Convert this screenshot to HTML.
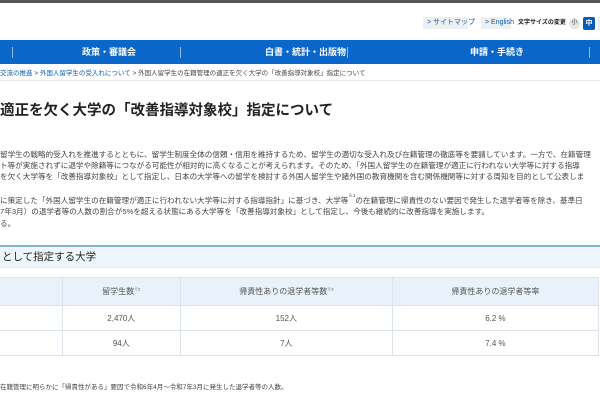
<!DOCTYPE html>
<html><head><meta charset="utf-8"><style>
*{margin:0;padding:0;box-sizing:border-box}
body{width:600px;height:400px;overflow:hidden;background:#fff;font-family:"Liberation Sans","Noto Sans CJK JP",sans-serif;color:#333;position:relative}
.a{position:absolute;white-space:nowrap}
.topbar{left:0;top:0;width:600px;height:3px;background:#555}
.btn{top:17px;height:12px;background:#eef0f2;font-size:7px;line-height:12px;color:#0a5bb5;padding-left:4px}
.nav{left:0;top:40px;width:600px;height:24px;background:#0a66c8}
.nav span{position:absolute;top:0;line-height:24px;color:#fff;font-size:9px;font-weight:bold}
.sep{position:absolute;top:7px;width:1px;height:11px;background:#8fb8e8}
.p{font-size:7.6px;color:#444;line-height:10px}
.p sup{font-size:4.5px;line-height:0;vertical-align:top}
table{position:absolute;left:-1px;top:277px;border-collapse:collapse;font-size:8px;color:#555}
td{border:1px solid #dde3ea;text-align:center}
td sup{font-size:4px;line-height:0}
tr.h td{background:#e9f2fb;height:28px}
tr.r td{height:25px}
</style></head><body>
<div class="a topbar"></div>
<div class="a btn" style="left:423px;width:45px">&gt; サイトマップ</div>
<div class="a btn" style="left:481px;width:30px">&gt; English</div>
<div class="a" style="left:518px;top:18px;font-size:6px;font-weight:bold;color:#222;line-height:10px">文字サイズの変更</div>
<div class="a" style="left:569px;top:18px;width:11px;height:11px;border-radius:50%;background:#e6e6e6;font-size:6px;text-align:center;line-height:11px">小</div>
<div class="a" style="left:583px;top:17px;width:12px;height:13px;border-radius:2px;background:#0a5bb5;color:#fff;font-size:7px;font-weight:bold;text-align:center;line-height:13px">中</div>
<div class="a" style="left:598px;top:17px;width:4px;height:13px;background:#e6eef8"></div>
<div class="a nav">
<div class="sep" style="left:12px"></div>
<span style="left:82px">政策・審議会</span>
<div class="sep" style="left:180px"></div>
<span style="left:265px">白書・統計・出版物</span>
<div class="sep" style="left:347px"></div>
<span style="left:470px">申請・手続き</span>
<div class="sep" style="left:589px"></div>
</div>
<div class="a" style="left:0;top:69px;font-size:6.5px;line-height:10px;color:#444"><span style="color:#0a5bb5">交流の推進</span> &gt; <span style="color:#0a5bb5">外国人留学生の受入れについて</span> &gt; 外国人留学生の在籍管理の適正を欠く大学の「改善指導対象校」指定について</div>
<div class="a" style="left:0;top:80px;width:600px;height:1px;background:#e8e8e8"></div>
<div class="a" style="left:0;top:102px;font-size:14.5px;font-weight:bold;color:#222;line-height:18px">適正を欠く大学の「改善指導対象校」指定について</div>
<div class="a p" style="left:0;top:150px">留学生の戦略的受入れを推進するとともに、留学生制度全体の信頼・信用を維持するため、留学生の適切な受入れ及び在籍管理の徹底等を要請しています。一方で、在籍管理</div>
<div class="a p" style="left:0;top:161px">ト等が実施されずに退学や除籍等につながる可能性が相対的に高くなることが考えられます。そのため、「外国人留学生の在籍管理が適正に行われない大学等に対する指導</div>
<div class="a p" style="left:0;top:172px">を欠く大学等を「改善指導対象校」として指定し、日本の大学等への留学を検討する外国人留学生や諸外国の教育機関を含む関係機関等に対する周知を目的として公表しま</div>
<div class="a p" style="left:0;top:196px">に策定した「外国人留学生の在籍管理が適正に行われない大学等に対する指導指針」に基づき、大学等<sup>※1</sup>の在籍管理に帰責性のない要因で発生した退学者等を除き、基準日</div>
<div class="a p" style="left:0;top:207px">7年3月）の退学者等の人数の割合が5%を超える状態にある大学等を「改善指導対象校」として指定し、今後も継続的に改善指導を実施します。</div>
<div class="a p" style="left:0;top:219px">る。</div>
<div class="a" style="left:0;top:245px;width:600px;height:23px;background:#eef6fb;border-top:2px solid #7fb7cf;border-bottom:1px solid #e3edf3"></div>
<div class="a" style="left:2px;top:250px;font-size:10.5px;color:#222;line-height:14px">として指定する大学</div>
<table>
<tr class="h"><td style="width:64px"></td><td style="width:120px">留学生数<sup>※2</sup></td><td style="width:216px">帰責性ありの退学者等数<sup>※3</sup></td><td style="width:210px">帰責性ありの退学者等率</td></tr>
<tr class="r"><td></td><td>2,470人</td><td>152人</td><td>6.2 %</td></tr>
<tr class="r"><td></td><td>94人</td><td>7人</td><td>7.4 %</td></tr>
</table>
<div class="a" style="left:0;top:383px;font-size:6.5px;color:#444;line-height:10px">在籍管理に明らかに「帰責性がある」要因で令和6年4月～令和7年3月に発生した退学者等の人数。</div>
</body></html>
